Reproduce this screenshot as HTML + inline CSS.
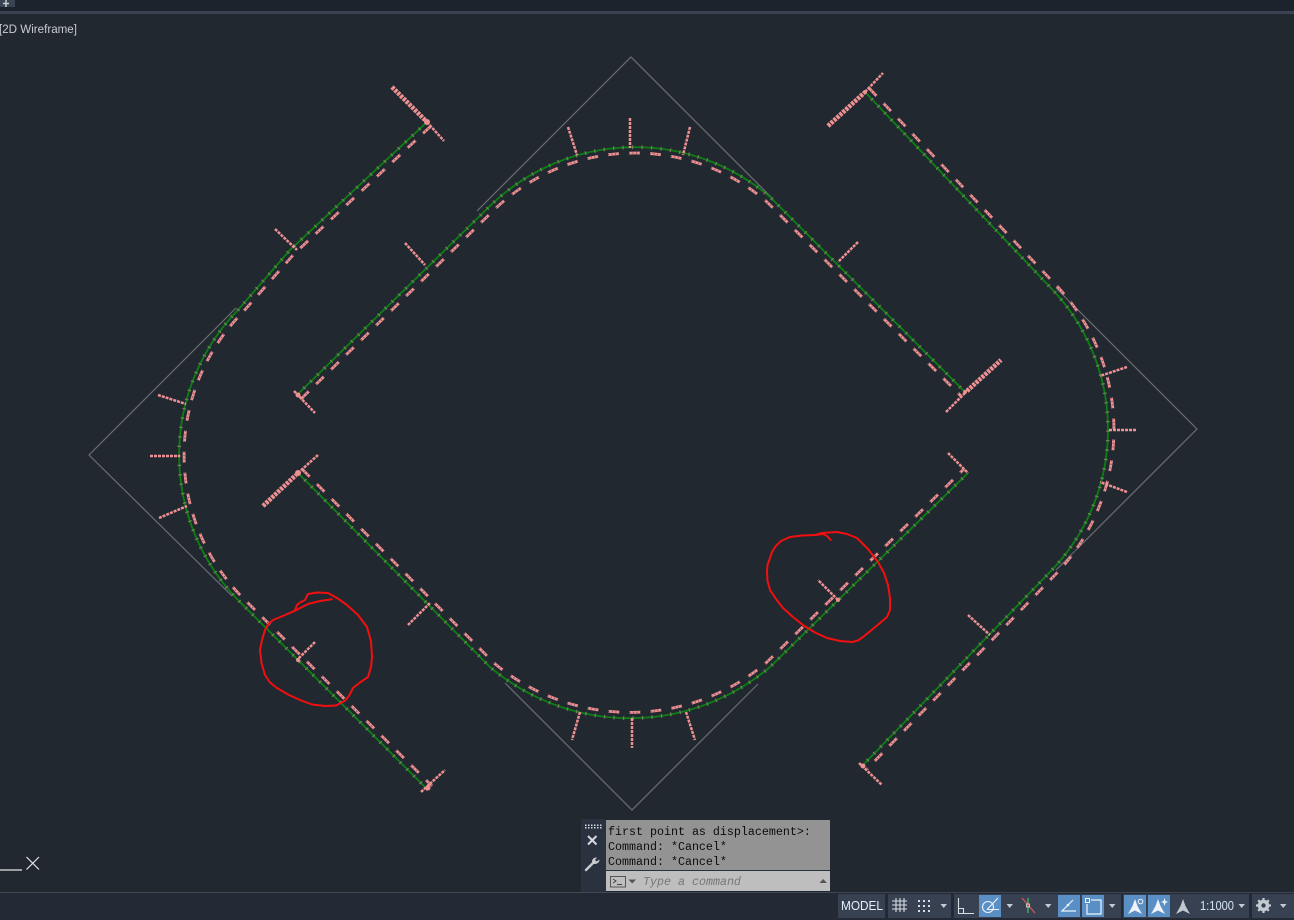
<!DOCTYPE html>
<html lang="en">
<head>
<meta charset="utf-8">
<title>2D Wireframe</title>
<style>
html,body{margin:0;padding:0;width:1294px;height:920px;overflow:hidden;background:#212830}
svg{position:absolute;left:0;top:0;display:block}
.green{fill:none;stroke:#0b8012;stroke-width:1.8}
.tick{fill:none;stroke:#72805a;stroke-width:3.6;stroke-dasharray:1.3 8.2}
.lab{fill:none;stroke:#ef9093;stroke-width:2.8;stroke-dasharray:11 10}
.labm{fill:none;stroke:#212830;stroke-width:1.4;stroke-dasharray:1 2.5;opacity:.6}
.gray{fill:none;stroke:#6c6e72;stroke-width:1.2}
.m{fill:none;stroke:#ef9093;stroke-width:2.5;stroke-dasharray:3 1}
.mt{fill:none;stroke:#ef9093;stroke-width:4.6;stroke-dasharray:3 1}
.red{fill:none;stroke:#f20f0f;stroke-width:2;stroke-linejoin:round;stroke-linecap:round}
.ic{fill:none;stroke:#d8dde3;stroke-width:1.1}
.dd{fill:#c4cad2}
.cmd{font-family:"Liberation Mono",monospace;font-size:11.67px;fill:#0c0c0c}
</style>
</head>
<body>
<svg width="1294" height="920" viewBox="0 0 1294 920" xmlns="http://www.w3.org/2000/svg">
<rect width="1294" height="920" fill="#212830"/>
<!-- top -->
<rect width="1294" height="11" fill="#1d232c"/>
<rect y="11" width="1294" height="3" fill="#3a4351"/>
<rect width="15" height="7" fill="#3a4351"/>
<path d="M3 3.5H9M6 0V7" stroke="#c8ccd2" stroke-width="1.5"/>
<text x="-1" y="33" font-family="'Liberation Sans',sans-serif" font-size="12.2" fill="#c9ccd0" textLength="78" lengthAdjust="spacingAndGlyphs">[2D Wireframe]</text>

<!-- diamond pieces -->
<path class="gray" d="M477 211L631 57L772 198"/>
<path class="gray" d="M1056 288L1197 429L1056 570"/>
<path class="gray" d="M236 308L89 455L232 596"/>
<path class="gray" d="M505 683L632 810L758 684"/>

<!-- tracks -->
<path class="green" d="M297 395L492 204A208 208 0 0 1 770 197L965 392"/>
<path class="green" d="M427 122L290 250L238 310A208 208 0 0 0 238 600L428 790"/>
<path class="green" d="M865 92L1049 286A204 204 0 0 1 1049 573L863 765"/>
<path class="green" d="M298 473L490 667A217 217 0 0 0 770 667L968 473"/>

<path class="tick" d="M297 395L492 204A208 208 0 0 1 770 197L965 392"/>
<path class="tick" d="M427 122L290 250L238 310A208 208 0 0 0 238 600L428 790"/>
<path class="tick" d="M865 92L1049 286A204 204 0 0 1 1049 573L863 765"/>
<path class="tick" d="M298 473L490 667A217 217 0 0 0 770 667L968 473"/>

<path class="lab" d="M301 399L496 208A203 203 0 0 1 766 201L961 396"/>
<path class="lab" d="M431 126L294 254L243 312A203 203 0 0 0 243 598L432 786"/>
<path class="lab" d="M869 88L1053 282A209 209 0 0 1 1053 577L867 769"/>
<path class="lab" d="M302 469L494 663A212 212 0 0 0 766 663L964 469"/>
<path class="labm" d="M301 399L496 208A203 203 0 0 1 766 201L961 396"/>
<path class="labm" d="M431 126L294 254L243 312A203 203 0 0 0 243 598L432 786"/>
<path class="labm" d="M869 88L1053 282A209 209 0 0 1 1053 577L867 769"/>
<path class="labm" d="M302 469L494 663A212 212 0 0 0 766 663L964 469"/>

<!-- markers -->
<g>
<path class="m" d="M568 127L577 155"/>
<path class="m" d="M630 118V148"/>
<path class="m" d="M690 127L683 155"/>
<path class="m" d="M405 243L425 265"/>
<path class="m" d="M858 242L838 262"/>
<path class="m" d="M294 391L315 413"/>
<path class="m" d="M946 412L965 393"/>
<path class="m" d="M427 122L444 141"/>
<path class="m" d="M275 229L297 250"/>
<path class="m" d="M158 395L186 404"/>
<path class="m" d="M150 456H180"/>
<path class="m" d="M159 518L187 506"/>
<path class="m" d="M315 642L297 660"/>
<path class="m" d="M421 792L445 770"/>
<path class="m" d="M865 92L883 73"/>
<path class="m" d="M1127 367L1100 376"/>
<path class="m" d="M1136 430H1108"/>
<path class="m" d="M1127 492L1100 482"/>
<path class="m" d="M968 615L990 635"/>
<path class="m" d="M859 763L882 785"/>
<path class="m" d="M298 473L318 455"/>
<path class="m" d="M408 625L430 603"/>
<path class="m" d="M580 712L572 740"/>
<path class="m" d="M632 718V748"/>
<path class="m" d="M686 712L695 740"/>
<path class="m" d="M838 600L818 580"/>
<path class="m" d="M948 453L968 473"/>
</g>
<path class="mt" d="M392 87L425 120"/>
<path class="mt" d="M263 506L296 475"/>
<path class="mt" d="M828 126L864 93"/>
<path class="mt" d="M967 391L1001 360"/>
<g fill="#ef9093">
<circle cx="427" cy="122" r="3"/><circle cx="298" cy="473" r="3"/><circle cx="865" cy="92" r="2"/>
<circle cx="965" cy="392" r="2"/><circle cx="298" cy="395" r="2.5"/><circle cx="428" cy="788" r="2.5"/>
<circle cx="863" cy="766" r="2.5"/><circle cx="298" cy="660" r="2"/><circle cx="838" cy="600" r="2"/>
</g>

<!-- red hand circles -->
<path class="red" d="M331.7 599.3L320 601L308 604L295 610.7L284 615.5L273 620L268 624.5L265 630L262 640L260 650L261.5 663L265 675L270 682.5L277 688L288 694.5L300 700L312 704.5L325 706L336 705.5L345 700.7L349.5 695L353 688L360 682.5L368 677L371 667L372 657L371 641L367 627L358 615L347 605L337 598L328 593L317 592.5L308 594L306 598L305 600L300 602.5L297 605L295 610"/>
<path class="red" d="M830.7 540L827 536L823 534L815 535L802 535.5L790 537L781 541L775 547L772 552L770 558L767.5 565L767 572L767.5 581L770 590L776 599L783 608L793 617L803 625L815 632.5L827 638L840 641L852 642L858 640.5L863 637L871 630.5L880 623L887 617L890 610L890 598L888 585L884 573L878 562L868 549L857 538L847 534L837 532L829 532.5L822 533L815 535"/>

<!-- UCS -->
<path d="M0 870H22" stroke="#e6e6e6" stroke-width="1.2"/>
<path d="M26.5 857L39 869.5M39 857L26.5 869.5" stroke="#e6e6e6" stroke-width="1.2"/>

<!-- status bar -->
<rect y="892" width="1294" height="28" fill="#232a35"/>
<rect y="892" width="1294" height="1" fill="#3f4754"/>
<rect x="838" y="894" width="47" height="24" fill="#374151"/>
<text x="841" y="910" font-family="'Liberation Sans',sans-serif" font-size="12.6" fill="#e6f0fa" textLength="42" lengthAdjust="spacingAndGlyphs">MODEL</text>
<rect x="888" y="894" width="63" height="24" fill="#374151"/>
<rect x="954" y="894" width="167" height="24" fill="#374151"/>
<rect x="1123" y="894" width="126" height="24" fill="#374151"/>
<rect x="1252" y="894" width="42" height="24" fill="#374151"/>
<rect x="979" y="895" width="22" height="22" fill="#5a8fc5"/>
<rect x="1058" y="895" width="22" height="22" fill="#5a8fc5"/>
<rect x="1082" y="895" width="22" height="22" fill="#5a8fc5"/>
<rect x="1124" y="895" width="22" height="22" fill="#5a8fc5"/>
<rect x="1148" y="895" width="22" height="22" fill="#5a8fc5"/>

<!-- grid -->
<path class="ic" d="M896 898V912M900 898V912M904 898V912M892 901H907M892 905H907M892 909H907"/>
<g fill="#d8dde3">
<rect x="918" y="900" width="2" height="2"/><rect x="923" y="900" width="2" height="2"/><rect x="928" y="900" width="2" height="2"/>
<rect x="918" y="905" width="2" height="2"/><rect x="923" y="905" width="2" height="2"/><rect x="928" y="905" width="2" height="2"/>
<rect x="918" y="910" width="2" height="2"/><rect x="923" y="910" width="2" height="2"/><rect x="928" y="910" width="2" height="2"/>
</g>
<path class="dd" d="M940.5 904H947L943.7 908Z"/>
<!-- ortho -->
<path class="ic" d="M958.5 898V913.5H974M958.5 908.5H963.5V913.5"/>
<!-- polar -->
<circle cx="988" cy="907" r="5.5" fill="none" stroke="#eef3f8" stroke-width="1.1"/>
<path d="M987 909.5L998 898M987 909.5H999" fill="none" stroke="#eef3f8" stroke-width="1.1"/>
<path class="dd" d="M1006.5 904H1013L1009.7 908Z"/>
<!-- tracking -->
<path d="M1028 898V913" stroke="#4fc06a" stroke-width="1.2"/>
<path d="M1022 898L1035 913" stroke="#d8585a" stroke-width="1.2"/>
<rect x="1026.5" y="904" width="3" height="3" fill="none" stroke="#e0e0e0" stroke-width=".8"/>
<path class="dd" d="M1045 904H1051.5L1048.2 908Z"/>
<!-- angle -->
<path d="M1076 911H1062L1073 900" fill="none" stroke="#eef3f8" stroke-width="1.2"/>
<circle cx="1068" cy="905" r="1.3" fill="#eef3f8"/>
<!-- box -->
<path d="M1091 900H1101V914H1087V904" fill="none" stroke="#eef3f8" stroke-width="1.2"/>
<rect x="1085.5" y="898.5" width="4" height="4" fill="none" stroke="#eef3f8" stroke-width="1"/>
<path class="dd" d="M1109 904H1115.5L1112.2 908Z"/>
<!-- annotation icons -->
<path d="M1135 899L1137.5 906L1142 914L1135 910.5L1128 914L1132.5 906Z" fill="#eef3f8"/>
<circle cx="1140.5" cy="901.5" r="2.3" fill="none" stroke="#eef3f8"/>
<path d="M1158 899L1160.5 906L1165 914L1158 910.5L1151 914L1155.5 906Z" fill="#eef3f8"/>
<path d="M1164.5 898L1165.5 901L1168 902L1165.5 903L1164.5 906L1163.5 903L1161 902L1163.5 901Z" fill="#eef3f8"/>
<path d="M1183 899L1185.5 906L1190 914L1183 910.5L1176 914L1180.5 906Z" fill="#c2c8cf"/>
<text x="1200" y="910" font-family="'Liberation Sans',sans-serif" font-size="12.6" fill="#d4e4f4" textLength="34" lengthAdjust="spacingAndGlyphs">1:1000</text>
<path class="dd" d="M1238.5 904H1245L1241.7 908Z"/>
<!-- gear -->
<circle cx="1263.5" cy="905.5" r="4.3" fill="none" stroke="#c4cad2" stroke-width="3"/>
<path d="M1263.5 898V913M1256 905.5H1271M1258.2 900.2L1268.8 910.8M1268.8 900.2L1258.2 910.8" stroke="#c4cad2" stroke-width="2.2"/>
<circle cx="1263.5" cy="905.5" r="2.2" fill="#374151"/>
<path class="dd" d="M1280 904H1286.5L1283.2 908Z"/>

<!-- command line -->
<rect x="581" y="819" width="25" height="73" fill="#2a3240"/>
<g fill="#d6d9dd">
<path d="M585 824.5h1.5v1.5h-1.5zM588 824.5h1.5v1.5h-1.5zM591 824.5h1.5v1.5h-1.5zM594 824.5h1.5v1.5h-1.5zM597 824.5h1.5v1.5h-1.5zM600 824.5h1.5v1.5h-1.5zM585 827h1.5v1.5h-1.5zM588 827h1.5v1.5h-1.5zM591 827h1.5v1.5h-1.5zM594 827h1.5v1.5h-1.5zM597 827h1.5v1.5h-1.5zM600 827h1.5v1.5h-1.5z"/>
</g>
<path d="M588 836L596.5 844.5M596.5 836L588 844.5" stroke="#d6d9dd" stroke-width="2"/>
<path d="M586 870L594 862" stroke="#c9cdd2" stroke-width="2.4" stroke-linecap="round"/>
<path d="M592.5 863.5C591 860 593.5 857 597 857.5L595 860L596.5 861.5L599.5 859.5C599.5 863 596 865 592.5 863.5Z" fill="#c9cdd2"/>
<rect x="606" y="820" width="224" height="50" fill="#939393"/>
<rect x="606" y="871" width="224" height="20" fill="#bebebe"/>
<rect x="606" y="870" width="224" height="1" fill="#2a3240"/>
<text class="cmd" x="608" y="835">first point as displacement&gt;:</text>
<text class="cmd" x="608" y="850">Command: *Cancel*</text>
<text class="cmd" x="608" y="865">Command: *Cancel*</text>
<rect x="610.5" y="876.5" width="15" height="10.5" fill="none" stroke="#555" stroke-width="1"/>
<path d="M613 879L616 881L613 883M617 884.5H622" fill="none" stroke="#444" stroke-width="1"/>
<path d="M628.5 879.5H636L632.2 883.5Z" fill="#555"/>
<text x="643" y="885" font-family="'Liberation Mono',monospace" font-size="11.67" font-style="italic" fill="#767676">Type a command</text>
<path d="M819.5 883H827L823.2 879Z" fill="#555"/>
</svg>
</body>
</html>
